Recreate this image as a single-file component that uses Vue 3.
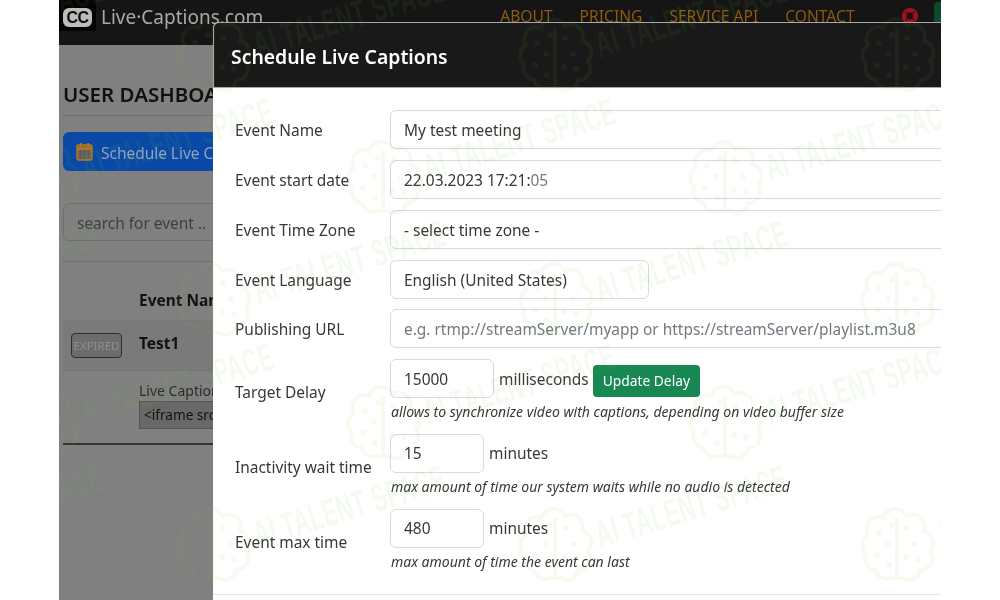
<script setup>
const step = 342
const marks = []
const rows = [57, 180, 302, 425, 547]
rows.forEach((y, i) => {
  const start = i % 2 === 0 ? 213 : 41
  for (let k = 0; k < 3; k++) marks.push({ x: start + k * step, y })
})
marks.push({ x: -129, y: 57 }, { x: -129, y: 302 }, { x: -129, y: 547 })
const dots = [[-18,-14],[-20,8],[-9,-3],[-8,18],[10,-19],[18,-3],[9,10],[21,12],[-5,-22]]
</script>

<template>
  <div class="screen">
    <div class="stage">
      <div class="page">
        <header class="topbar">
          <div class="brand">
            <span class="logo"><span class="logo-cc">CC</span></span>
            <span class="brand-name">Live·Captions.com</span>
          </div>
          <nav class="nav">
            <a>ABOUT</a><a>PRICING</a><a>SERVICE API</a><a>CONTACT</a>
          </nav>
          <svg class="ring" viewBox="0 0 20 20" width="18" height="18">
            <circle cx="10" cy="10" r="6.5" fill="none" stroke="#a80f1c" stroke-width="5"/>
            <path d="M5 5l3 3M15 5l-3 3M5 15l3-3M15 15l-3-3" stroke="#2a1414" stroke-width="1.4"/>
          </svg>
          <span class="account"></span>
        </header>
        <main class="dash">
          <h2 class="dash-title">USER DASHBOARD</h2>
          <div class="rule"></div>
          <button class="schedule">
            <svg viewBox="0 0 18 20" width="17" height="19">
              <rect x="1" y="3" width="16" height="16" rx="1.5" fill="#8a6a3a" stroke="#b5781c" stroke-width="1.4"/>
              <path d="M1 7h16" stroke="#b5781c" stroke-width="2.4"/>
              <path d="M5 1v4M13 1v4" stroke="#b5781c" stroke-width="2"/>
              <path d="M2 10.5h14M2 13.5h14M2 16.5h14M5 8v10M9 8v10M13 8v10" stroke="#3f5a8c" stroke-width="1"/>
            </svg>
            <span class="schedule-text">Schedule Live Captions</span>
          </button>
          <input class="search" placeholder="search for event .." />
          <div class="rule search-rule"></div>
          <div class="th">Event Name</div>
          <div class="event">
            <span class="expired">EXPIRED</span>
            <strong>Test1</strong>
          </div>
          <div class="embed">
            <div class="embed-label">Live Captions</div>
            <div class="embed-code">&lt;iframe src="https://live-captions.com"</div>
          </div>
          <div class="rule dark"></div>
        </main>
      </div>

      <section class="modal">
        <div class="modal-head">Schedule Live Captions</div>
        <div class="modal-body">
          <div class="row">
            <label>Event Name</label>
            <input class="field" value="My test meeting" />
          </div>
          <div class="row">
            <label>Event start date</label>
            <div class="field">22.03.2023 17:21:<span class="sec">05</span></div>
          </div>
          <div class="row">
            <label>Event Time Zone</label>
            <select class="field"><option>- select time zone -</option></select>
          </div>
          <div class="row">
            <label>Event Language</label>
            <select class="field lang"><option>English (United States)</option></select>
          </div>
          <div class="row">
            <label>Publishing URL</label>
            <input class="field" placeholder="e.g. rtmp://streamServer/myapp or https://streamServer/playlist.m3u8" />
          </div>
          <div class="row tall">
            <label>Target Delay</label>
            <div class="controls">
              <div class="inline">
                <input class="field delay" value="15000" />
                <span>milliseconds</span>
                <button class="update">Update Delay</button>
              </div>
              <p class="help">allows to synchronize video with captions, depending on video buffer size</p>
            </div>
          </div>
          <div class="row tall close">
            <label>Inactivity wait time</label>
            <div class="controls">
              <div class="inline">
                <input class="field mins" value="15" />
                <span>minutes</span>
              </div>
              <p class="help">max amount of time our system waits while no audio is detected</p>
            </div>
          </div>
          <div class="row tall close">
            <label>Event max time</label>
            <div class="controls">
              <div class="inline">
                <input class="field mins" value="480" />
                <span>minutes</span>
              </div>
              <p class="help">max amount of time the event can last</p>
            </div>
          </div>
        </div>
        <div class="modal-foot"></div>
      </section>

      <svg class="watermark" width="882" height="600" viewBox="59 0 882 600">
        <g v-for="(m, i) in marks" :key="i" :transform="`translate(${m.x} ${m.y})`">
          <path class="brain" d="M-6 31A11 11 0 0 1-21 23A12 12 0 0 1-31 7A12 12 0 0 1-29-12A12 12 0 0 1-14-29A13 13 0 0 1 10-31A12 12 0 0 1 27-16A12 12 0 0 1 33 4A12 12 0 0 1 23 23A11 11 0 0 1 6 31ZM0 31V-29"/>
          <circle v-for="(d, j) in dots" :key="j" class="dot" :cx="d[0]" :cy="d[1]" r="3"/>
          <text class="mark-text" transform="translate(45 1) rotate(-17) scale(.57 1)">AI TALENT SPACE</text>
        </g>
      </svg>
    </div>
  </div>
</template>

<style>
html, body { margin: 0; background: #fff; }
</style>

<style scoped>
.screen {
  width: 1000px;
  height: 600px;
  display: flex;
  justify-content: center;
  overflow: hidden;
  background: #fff;
  font-family: "Noto Sans", "Open Sans", sans-serif;
  font-size: 15.45px;
  color: #383838;
  filter: blur(0.35px);
}
.stage {
  position: relative;
  width: 882px;
  height: 600px;
  overflow: hidden;
  background: #808080;
}
.page { width: 882px; height: 600px; }
.topbar {
  height: 45px;
  background: #151515;
  display: flex;
  align-items: flex-start;
}
.brand { display: flex; align-items: center; height: 31px; flex: none; }
.logo {
  width: 37px;
  height: 31px;
  background: #030303;
  display: flex;
  align-items: center;
  justify-content: center;
}
.logo-cc {
  width: 29px;
  height: 19px;
  margin-top: 4px;
  border-radius: 6px;
  background: #bcbcbc;
  color: #0b0b0b;
  font: 700 16px/19px "Liberation Sans", sans-serif;
  letter-spacing: -.5px;
  text-align: center;
}
.brand-name { margin: 3px 0 0 5px; font-size: 19px; color: #a9a9a9; white-space: nowrap; }
.nav {
  flex: none;
  margin-left: 237px;
  display: flex;
  gap: 27px;
  font-size: 15.6px;
  line-height: 32px;
  color: #8a5a12;
  white-space: nowrap;
}
.ring { flex: none; margin: 7px 0 0 46px; }
.account {
  flex: none;
  width: 30px;
  height: 30px;
  margin-left: 15px;
  margin-top: 2px;
  border-radius: 4px;
  background: #0c4a2c;
}
.dash { padding: 0 4px; position: relative; }
.dash-title {
  margin: 33px 0 0;
  font-size: 20.5px;
  line-height: 32px;
  font-weight: 600;
  color: #101010;
  white-space: nowrap;
}
.rule { height: 1px; background: #707070; margin-top: 4px; }
.dash-title + .rule { margin-top: 5px; }
.schedule {
  display: flex;
  align-items: center;
  gap: 8px;
  width: 260px;
  height: 39px;
  margin-top: 16px;
  padding: 0 13px;
  border: 0;
  border-radius: 6px;
  background: #0a4aa6;
  color: #8fa3bd;
  font: inherit;
  white-space: nowrap;
}
.schedule-text { padding-top: 2px; }
.search {
  display: block;
  box-sizing: border-box;
  width: 260px;
  height: 38px;
  margin-top: 32px;
  padding: 2px 13px 0;
  border: 1px solid #6e6e6e;
  border-radius: 6px;
  background: #808080;
  font: inherit;
}
.search::placeholder { color: #3f3f3f; opacity: 1; }
.search-rule { margin-top: 20px; }
.th { margin: 26px 0 0 76px; font-weight: 700; line-height: 24px; color: #111; white-space: nowrap; }
.event {
  box-sizing: border-box;
  display: flex;
  align-items: center;
  height: 51px;
  margin-top: 8px;
  padding-left: 8px;
  background: #7a7a7a;
  border-top: 1px solid #767676;
  border-bottom: 1px solid #767676;
}
.expired {
  box-sizing: border-box;
  width: 51px;
  height: 25px;
  border: 1px solid #2e2e2e;
  border-radius: 4px;
  background: #6c6c6c;
  color: #8f8f8f;
  font-size: 11.5px;
  line-height: 24px;
  text-align: center;
}
.event strong { margin: 0 0 5px 17px; color: #111; }
.embed { margin: 10px 0 0 76px; }
.embed-label { font-size: 14px; line-height: 20px; color: #2a2a2a; white-space: nowrap; }
.embed-code {
  box-sizing: border-box;
  width: 300px;
  height: 28px;
  padding-left: 4px;
  border: 1px solid #555;
  background: #686868;
  color: #111;
  font-size: 13.6px;
  line-height: 26px;
  white-space: nowrap;
  overflow: hidden;
}
.dark { height: 2px; background: #333; margin-top: 14px; }

.modal {
  position: absolute;
  left: 154px;
  top: 22px;
  width: 800px;
  background: #fff;
  border-radius: 6px 6px 0 0;
}
.modal-head {
  box-sizing: border-box;
  height: 66px;
  padding-left: 17px;
  border: 1px solid #a8a8a8;
  border-radius: 6px 6px 0 0;
  background: #191919;
  color: #fff;
  font-size: 19.4px;
  font-weight: 600;
  line-height: 67px;
}
.modal-body {
  display: flex;
  flex-direction: column;
  gap: 10.8px;
  padding: 22.2px 0 0 22px;
}
.row {
  display: grid;
  grid-template-columns: 155px 1fr;
  align-items: center;
}
.row.tall { min-height: 66px; }
.row.close { margin-top: -2px; }
.row label { padding-top: 1px; }
.row.tall label { padding-top: 0; }
.controls { align-self: start; }
.field {
  box-sizing: border-box;
  display: block;
  width: 640px;
  height: 39px;
  padding: 0 13px;
  border: 1px solid #d6d9dd;
  border-radius: 6px;
  background: transparent;
  color: #383838;
  font: inherit;
  line-height: 38px;
  appearance: none;
  outline: none;
}
select.field { padding-bottom: 1px; }
.field::placeholder { color: #73797f; opacity: 1; }
.sec { color: #73797f; }
.lang { width: 259px; }
.delay { width: 104px; }
.mins { width: 94px; }
.inline { display: flex; align-items: center; gap: 5px; }
.update {
  box-sizing: border-box;
  height: 32px;
  margin: 5px 0 0 -1px;
  padding: 0 10px 2px;
  border: 0;
  border-radius: 4px;
  background: #198754;
  color: #fff;
  font: inherit;
  font-size: 13.8px;
  white-space: nowrap;
}
.help {
  margin: 4px 0 0 1px;
  font-size: 14px;
  line-height: 20px;
  font-style: italic;
  white-space: nowrap;
  color: #383838;
}
.modal-foot { height: 200px; margin-top: 19.5px; border-top: 1px solid #e4e6e8; }

.watermark { position: absolute; left: 0; top: 0; pointer-events: none; }
.brain { fill: none; stroke: #72c832; stroke-width: 4; opacity: .07; }
.dot { fill: #72c832; opacity: .07; }
.mark-text {
  fill: #72c832;
  opacity: .07;
  font-family: "Liberation Sans", sans-serif;
  font-weight: 700;
  font-size: 38px;
  letter-spacing: 1px;
}
</style>
